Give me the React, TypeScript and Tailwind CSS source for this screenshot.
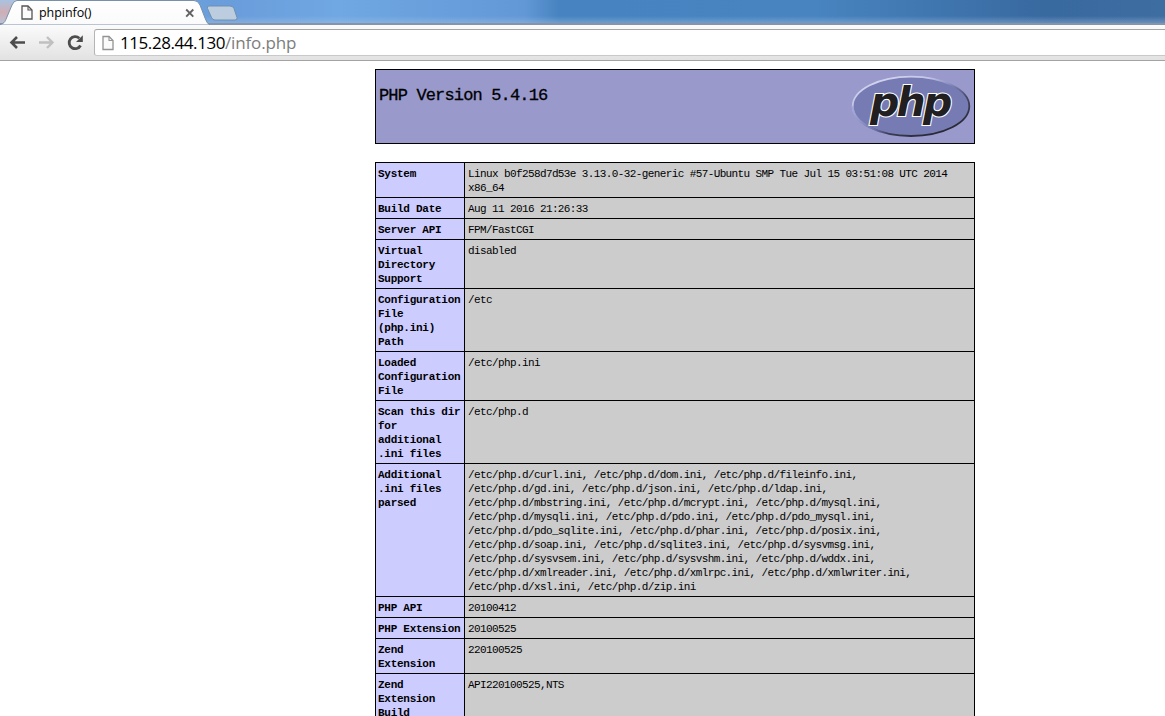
const rows: [string[], string[]][] = [
  [["System"], ["Linux b0f258d7d53e 3.13.0-32-generic #57-Ubuntu SMP Tue Jul 15 03:51:08 UTC 2014", "x86_64"]],
  [["Build Date"], ["Aug 11 2016 21:26:33"]],
  [["Server API"], ["FPM/FastCGI"]],
  [["Virtual", "Directory", "Support"], ["disabled"]],
  [["Configuration", "File", "(php.ini)", "Path"], ["/etc"]],
  [["Loaded", "Configuration", "File"], ["/etc/php.ini"]],
  [["Scan this dir", "for", "additional", ".ini files"], ["/etc/php.d"]],
  [
    ["Additional", ".ini files", "parsed"],
    [
      "/etc/php.d/curl.ini, /etc/php.d/dom.ini, /etc/php.d/fileinfo.ini,",
      "/etc/php.d/gd.ini, /etc/php.d/json.ini, /etc/php.d/ldap.ini,",
      "/etc/php.d/mbstring.ini, /etc/php.d/mcrypt.ini, /etc/php.d/mysql.ini,",
      "/etc/php.d/mysqli.ini, /etc/php.d/pdo.ini, /etc/php.d/pdo_mysql.ini,",
      "/etc/php.d/pdo_sqlite.ini, /etc/php.d/phar.ini, /etc/php.d/posix.ini,",
      "/etc/php.d/soap.ini, /etc/php.d/sqlite3.ini, /etc/php.d/sysvmsg.ini,",
      "/etc/php.d/sysvsem.ini, /etc/php.d/sysvshm.ini, /etc/php.d/wddx.ini,",
      "/etc/php.d/xmlreader.ini, /etc/php.d/xmlrpc.ini, /etc/php.d/xmlwriter.ini,",
      "/etc/php.d/xsl.ini, /etc/php.d/zip.ini",
    ],
  ],
  [["PHP API"], ["20100412"]],
  [["PHP Extension"], ["20100525"]],
  [["Zend", "Extension"], ["220100525"]],
  [["Zend", "Extension", "Build"], ["API220100525,NTS"]],
];

function PageIcon({ className, stroke }: { className: string; stroke: string }) {
  return (
    <svg className={className} viewBox="0 0 12 15" fill="none">
      <path d="M1 1H7L11 5V14H1Z" fill="#fbfbfb" stroke={stroke} strokeWidth="1.3" />
      <path d="M7 1V5H11" stroke={stroke} strokeWidth="1.1" />
    </svg>
  );
}

function TabStrip() {
  return (
    <div className="relative h-[25px] overflow-hidden bg-[linear-gradient(90deg,#7aabe0_0%,#699ddb_20%,#70a8e3_29%,#6298d6_45%,#4783c0_48%,#4884c0_70%,#38699f_90%,#3e6da1_100%)]">
      <svg className="absolute inset-0 h-[25px] w-[1165px]" viewBox="0 0 1165 25">
        <defs>
          <linearGradient id="shade" x1="0" y1="0" x2="0" y2="1">
            <stop offset="0" stopColor="#a9c4e4" stopOpacity="0" />
            <stop offset="1" stopColor="#a9c4e4" stopOpacity="0.45" />
          </linearGradient>
          <linearGradient id="tab" x1="0" y1="0" x2="0" y2="1">
            <stop offset="0" stopColor="#ffffff" />
            <stop offset="1" stopColor="#fafafa" />
          </linearGradient>
          <linearGradient id="edge" x1="0" y1="0" x2="0" y2="1">
            <stop offset="0" stopColor="#a9c3e2" />
            <stop offset="0.5" stopColor="#cfaeb4" />
            <stop offset="1" stopColor="#b9c3d6" />
          </linearGradient>
        </defs>
        <rect x="0" y="16" width="1165" height="8" fill="url(#shade)" />
        <rect x="0" y="0" width="18" height="24" fill="url(#edge)" />
        <path d="M0 24H1165" stroke="#8594a9" strokeWidth="2" />
        <path d="M-2 25C4 24 5 22 6.500 18L12 5Q14 .5 17 .5H194Q198 .5 200 5L205 18Q207 24 210 25Z" fill="url(#tab)" stroke="#7890aa" strokeWidth="1" />
        <path d="M209 6H230Q233 6 234 8.500L237 17.500Q237.500 20 235 20H215Q212.500 20 211.500 17.500L207.500 8.500Q206.500 6 209 6Z" fill="#bccddf" stroke="#718fad" />
        <path d="M186.200 9.500L193.300 16.600M193.300 9.500L186.200 16.600" stroke="#626262" strokeWidth="1.900" />
      </svg>
      <div className="relative flex h-[25px] items-center pl-[21px]">
        <PageIcon className="h-[15px] w-[12px]" stroke="#555555" />
        <span className="ml-[6px] font-['Open_Sans',sans-serif] text-[12.5px] leading-[25px] tracking-[-0.05px] text-black">phpinfo()</span>
      </div>
    </div>
  );
}

function Toolbar() {
  return (
    <div className="flex h-[36px] items-start border-b border-[#a3a3a3] bg-[linear-gradient(#fbfbfb,#e2e2e2)] pt-[4px]">
      <svg className="h-[27px] w-[94px] shrink-0" viewBox="0 29 94 27" fill="none">
        <path d="M25 42.500H12M17 37L11.500 42.500L17 48" stroke="#4d4d4d" strokeWidth="2.600" />
        <path d="M39 42.500H52M47 37L52.500 42.500L47 48" stroke="#c0c0c0" strokeWidth="2.400" />
        <path d="M80.500 45.500A6 6 0 1 1 79.300 38.300" stroke="#4d4d4d" strokeWidth="2.800" />
        <path d="M82.800 35.200V42H76Z" fill="#4d4d4d" />
      </svg>
      <div className="flex h-[27px] flex-1 items-center rounded-l-[3px] border-y border-l border-b-[#c9c9c9] border-l-[#b5b5b5] border-t-[#a5a5a5] bg-white pl-[7px]">
        <PageIcon className="h-[16px] w-[12px] shrink-0" stroke="#939393" />
        <span className="ml-[6px] whitespace-nowrap font-['Open_Sans',sans-serif] text-[17px] leading-[25px] tracking-[-0.43px] text-black">
          115.28.44.130<span className="tracking-[-0.15px] text-[#7d7d7d]">/info.php</span>
        </span>
      </div>
    </div>
  );
}

function PhpLogo() {
  return (
    <svg className="h-[67px] w-[120px]" viewBox="0 0 120 67">
      <defs>
        <linearGradient id="rim" x1="0.15" y1="0" x2="0.85" y2="1">
          <stop offset="0" stopColor="#d8daf0" />
          <stop offset="0.25" stopColor="#c3c6e6" />
          <stop offset="0.42" stopColor="#8287bb" />
          <stop offset="0.62" stopColor="#454664" />
          <stop offset="1" stopColor="#202026" />
        </linearGradient>
        <linearGradient id="rimLeft" x1="0" y1="0" x2="1" y2="0">
          <stop offset="0" stopColor="#a4a8d6" />
          <stop offset="0.35" stopColor="#777bb4" stopOpacity="0.9" />
          <stop offset="0.6" stopColor="#777bb4" stopOpacity="0" />
        </linearGradient>
      </defs>
      <ellipse cx="60" cy="33.300" rx="58.300" ry="29.700" fill="#777bb4" stroke="url(#rim)" strokeWidth="1.800" />
      <path d="M1.700 33.300A58.300 29.700 0 0 0 60 63" fill="none" stroke="url(#rimLeft)" strokeWidth="2" />
      <text x="19 45.500 72" y="43" fontFamily="DejaVu Sans, sans-serif" fontWeight="700" fontStyle="italic" fontSize="41" fill="#211f21" stroke="#ffffff" strokeWidth="2.200" strokeLinejoin="miter" paintOrder="stroke">php</text>
    </svg>
  );
}

export default function App() {
  return (
    <div className="h-[716px] w-[1165px] overflow-hidden bg-white">
      <TabStrip />
      <Toolbar />
      <main className="ml-[375px] w-[600px] pt-[8px] font-['Liberation_Mono',monospace] text-black">
        <header className="flex h-[75px] justify-between border border-black bg-[#9999cc] pl-[3px] pr-[3px] pt-[3px]">
          <h1 className="mt-[12px] text-[17px] leading-[22px] tracking-[-0.85px] [-webkit-text-stroke:0.3px_black]">PHP Version 5.4.16</h1>
          <PhpLogo />
        </header>
        <div className="mt-[18px] border-x border-t border-black text-[11px] leading-[14px]">
          {rows.map(([name, value], i) => (
            <div key={i} className="flex border-b border-black">
              <div className="w-[89px] shrink-0 whitespace-nowrap border-r border-black bg-[#ccccff] pb-[2px] pl-[2px] pt-[4px] font-bold tracking-[-0.27px]">
                {name.map((line) => <div key={line}>{line}</div>)}
              </div>
              <div className="flex-1 whitespace-nowrap bg-[#cccccc] pb-[2px] pl-[3px] pt-[4px] tracking-[-0.61px]">
                {value.map((line) => <div key={line}>{line}</div>)}
              </div>
            </div>
          ))}
        </div>
      </main>
    </div>
  );
}
